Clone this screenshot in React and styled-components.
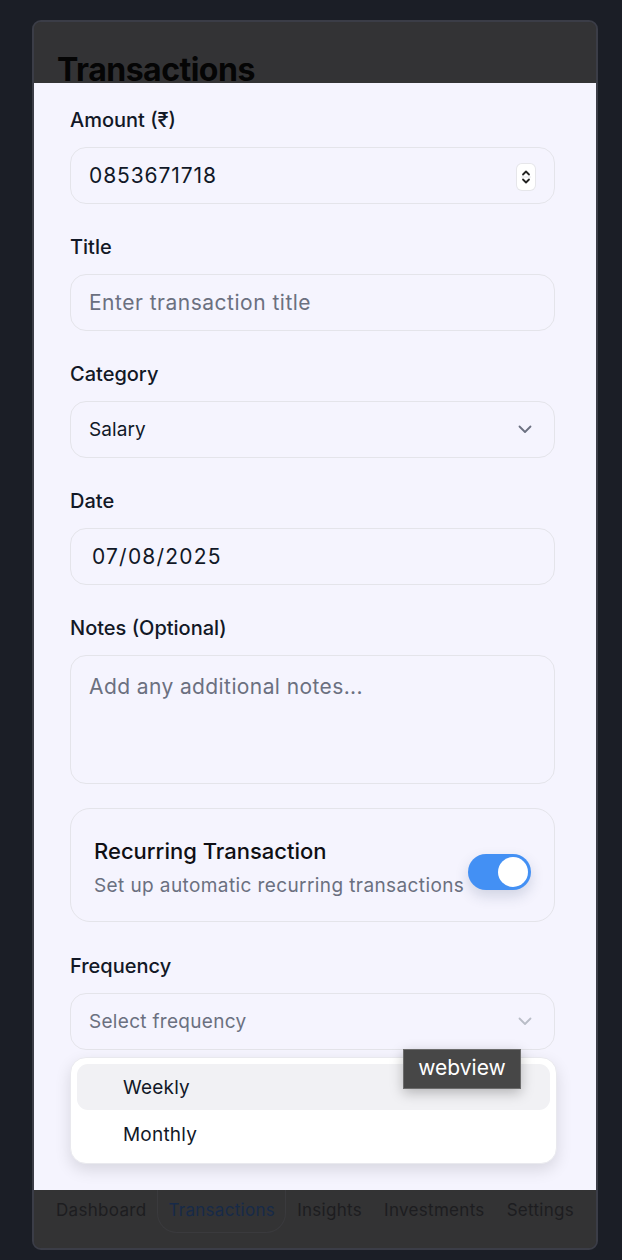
import React from "react";
import styled, { createGlobalStyle } from "styled-components";

const Global = createGlobalStyle`
  html, body { margin: 0; padding: 0; background: #1b1e26; }
  body { font-family: Inter, "Noto Sans", "Liberation Sans", sans-serif; -webkit-font-smoothing: antialiased; }
  * { box-sizing: border-box; }
`;

const Page = styled.div`
  width: 622px;
  height: 1260px;
  padding: 20px 24px 10px 32px;
  background: #1b1e26;
`;

const Frame = styled.div`
  height: 1230px;
  border: 2px solid #3b3d47;
  border-radius: 9px;
  overflow: hidden;
  display: flex;
  flex-direction: column;
  background: #333335;
`;

const Header = styled.div`
  height: 61px;
  flex: none;
  padding: 32px 0 0 23px;
  overflow: hidden;
  background: #333335;
`;

const PageTitle = styled.h1`
  margin: 0;
  font-size: 32px;
  line-height: 32px;
  font-weight: 700;
  letter-spacing: -0.5px;
  color: #050505;
`;

const Sheet = styled.div`
  flex: 1;
  background: #f5f4fe;
  padding: 24px 41px 0 36px;
  display: flex;
  flex-direction: column;
`;

const Field = styled.div`
  display: flex;
  flex-direction: column;
  gap: 14px;
  margin-bottom: ${(p) => p.$mb ?? 30}px;
  position: relative;
`;

const Label = styled.label`
  font-size: 20px;
  line-height: 26px;
  font-weight: 500;
  color: #121826;
`;

const Box = styled.div`
  height: ${(p) => p.$h ?? 57}px;
  border: 1px solid #e4e4ea;
  border-radius: 16px;
  background: #f5f4fe;
  display: flex;
  align-items: ${(p) => (p.$top ? "flex-start" : "center")};
  justify-content: space-between;
  padding: ${(p) => (p.$top ? "18px 18px" : `0 22px 0 ${p.$pl ?? 18}px`)};
`;

const Value = styled.span`
  font-size: ${(p) => p.$size ?? 21}px;
  line-height: 26px;
  color: ${(p) => (p.$placeholder ? "#6b7080" : "#111827")};
  letter-spacing: ${(p) => p.$ls ?? 0}px;
`;

const Stepper = styled.div`
  width: 18px;
  height: 26px;
  border-radius: 5px;
  background: #ffffff;
  box-shadow: 0 0 0 1px #e6e6ea;
  display: flex;
  flex-direction: column;
  align-items: center;
  justify-content: center;
  margin-right: -3px;
  margin-top: 2px;
`;

const Card = styled.div`
  border: 1px solid #e4e4ea;
  border-radius: 20px;
  height: 114px;
  padding: 0 23px;
  display: flex;
  align-items: center;
  justify-content: space-between;
  margin-bottom: 31px;
`;

const CardText = styled.div`
  display: flex;
  flex-direction: column;
  gap: 9px;
  padding-top: 5px;
`;

const CardTitle = styled.div`
  font-size: 22px;
  line-height: 28px;
  font-weight: 500;
  color: #0f0f14;
`;

const CardSub = styled.div`
  font-size: 19px;
  line-height: 24px;
  letter-spacing: 0.4px;
  color: #6b7080;
`;

const Toggle = styled.div`
  width: 63px;
  height: 36px;
  border-radius: 18px;
  background: #4390f4;
  padding: 3px;
  display: flex;
  justify-content: flex-end;
  box-shadow: 0 6px 14px rgba(40, 60, 100, 0.18);
  flex: none;
  margin-top: 14px;
`;

const Knob = styled.div`
  width: 30px;
  height: 30px;
  border-radius: 50%;
  background: #ffffff;
`;

const Menu = styled.div`
  position: absolute;
  top: 104px;
  left: 0;
  width: 487px;
  background: #ffffff;
  border: 1px solid #e9e9ee;
  border-radius: 16px;
  box-shadow: 0 6px 16px rgba(0, 0, 0, 0.12);
  padding: 6px;
  display: flex;
  flex-direction: column;
  gap: 1px;
  z-index: 2;
`;

const MenuItem = styled.div`
  height: 46px;
  border-radius: 11px;
  padding-left: 46px;
  display: flex;
  align-items: center;
  font-size: 19px;
  letter-spacing: 0.2px;
  color: #111827;
  background: ${(p) => (p.$active ? "#f1f1f4" : "transparent")};
`;

const Tooltip = styled.div`
  position: absolute;
  top: 96px;
  left: 333px;
  width: 118px;
  height: 40px;
  background: #474747;
  border: 1px solid #6c6c6c;
  box-shadow: 0 4px 12px rgba(0, 0, 0, 0.25);
  color: #ffffff;
  font-size: 21px;
  display: flex;
  align-items: center;
  justify-content: center;
  padding-bottom: 4px;
  z-index: 3;
`;

const Nav = styled.div`
  height: 58px;
  flex: none;
  background: #333334;
  display: flex;
  padding-left: 11px;
`;

const NavItem = styled.div`
  height: 43px;
  padding: 8px 10px 0;
  font-size: 17px;
  line-height: 24px;
  letter-spacing: 0.3px;
  color: ${(p) => (p.$active ? "#172a48" : "#1d1d20")};
  border: ${(p) => (p.$active ? "1px solid #3a3a3d" : "1px solid transparent")};
  border-top: none;
  border-radius: 0 0 20px 20px;
  white-space: nowrap;
`;

const Chevron = ({ color }) => (
  <svg width="14" height="9" viewBox="0 0 14 9" fill="none">
    <path d="M1.5 1.5L7 7L12.5 1.5" stroke={color} strokeWidth="1.8" strokeLinecap="round" strokeLinejoin="round" />
  </svg>
);

const StepIcon = () => (
  <Stepper>
    <svg width="10" height="20" viewBox="0 0 10 20" fill="none">
      <path d="M2 7.5L5 4.5L8 7.5" stroke="#222" strokeWidth="1.8" strokeLinecap="round" strokeLinejoin="round" />
      <line x1="0" y1="10" x2="10" y2="10" stroke="#e3e3e8" strokeWidth="1" />
      <path d="M2 12.5L5 15.5L8 12.5" stroke="#222" strokeWidth="1.8" strokeLinecap="round" strokeLinejoin="round" />
    </svg>
  </Stepper>
);

export default function App() {
  return (
    <Page>
      <Global />
      <Frame>
        <Header>
          <PageTitle>Transactions</PageTitle>
        </Header>
        <Sheet>
          <Field>
            <Label>Amount (₹)</Label>
            <Box>
              <Value $ls={0.9}>0853671718</Value>
              <StepIcon />
            </Box>
          </Field>
          <Field>
            <Label>Title</Label>
            <Box>
              <Value $placeholder $ls={0.5}>Enter transaction title</Value>
            </Box>
          </Field>
          <Field>
            <Label>Category</Label>
            <Box>
              <Value $size={19} $ls={0.1}>Salary</Value>
              <Chevron color="#6b7080" />
            </Box>
          </Field>
          <Field>
            <Label>Date</Label>
            <Box $pl={21}>
              <Value $ls={1.2}>07/08/2025</Value>
            </Box>
          </Field>
          <Field $mb={24}>
            <Label>Notes (Optional)</Label>
            <Box $h={129} $top>
              <Value $placeholder $ls={0.4}>Add any additional notes...</Value>
            </Box>
          </Field>
          <Card>
            <CardText>
              <CardTitle>Recurring Transaction</CardTitle>
              <CardSub>Set up automatic recurring transactions</CardSub>
            </CardText>
            <Toggle>
              <Knob />
            </Toggle>
          </Card>
          <Field>
            <Label>Frequency</Label>
            <Box>
              <Value $size={19} $ls={0.3} $placeholder>Select frequency</Value>
              <Chevron color="#b9bdc7" />
            </Box>
            <Menu>
              <MenuItem $active>Weekly</MenuItem>
              <MenuItem>Monthly</MenuItem>
            </Menu>
            <Tooltip>webview</Tooltip>
          </Field>
        </Sheet>
        <Nav>
          <NavItem>Dashboard</NavItem>
          <NavItem $active>Transactions</NavItem>
          <NavItem>Insights</NavItem>
          <NavItem>Investments</NavItem>
          <NavItem>Settings</NavItem>
        </Nav>
      </Frame>
    </Page>
  );
}
